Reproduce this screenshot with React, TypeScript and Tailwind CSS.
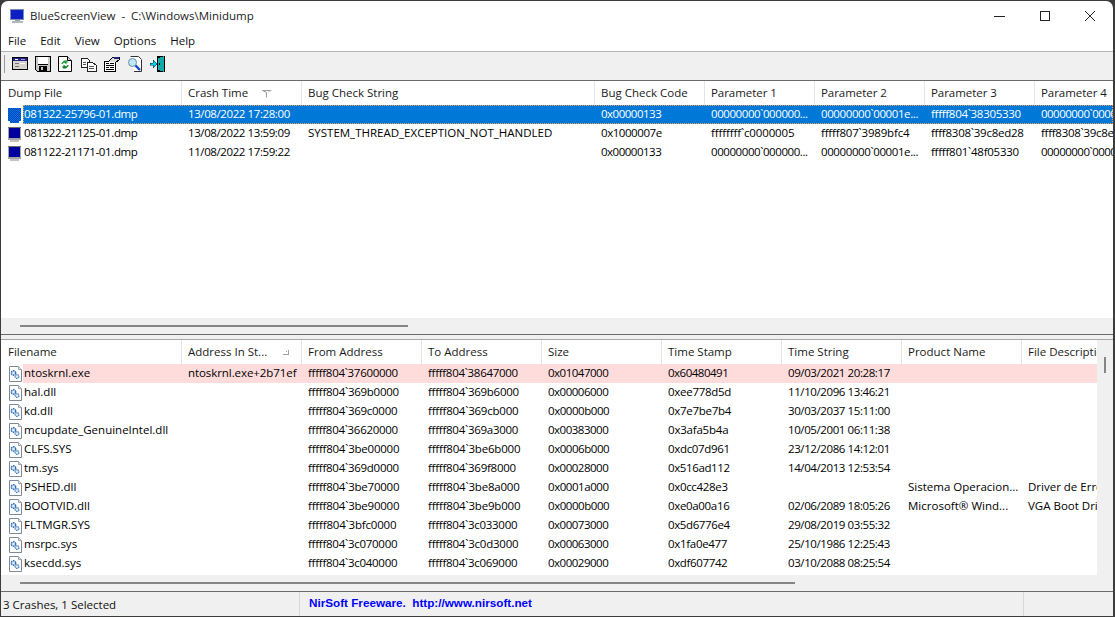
import React from "react";

const topGrid = "grid grid-cols-[181px_120px_293px_110px_110px_110px_110px_1fr]";
const botGrid = "grid grid-cols-[181px_120px_120px_120px_120px_120px_120px_120px_1fr]";

const topHead = ["Dump File", "Crash Time", "Bug Check String", "Bug Check Code", "Parameter 1", "Parameter 2", "Parameter 3", "Parameter 4"];
const topRows = [
  ["081322-25796-01.dmp", "13/08/2022 17:28:00", "", "0x00000133", "00000000`000000...", "00000000`00001e...", "fffff804`38305330", "00000000`00000000"],
  ["081322-21125-01.dmp", "13/08/2022 13:59:09", "SYSTEM_THREAD_EXCEPTION_NOT_HANDLED", "0x1000007e", "ffffffff`c0000005", "fffff807`3989bfc4", "ffff8308`39c8ed28", "ffff8308`39c8e540"],
  ["081122-21171-01.dmp", "11/08/2022 17:59:22", "", "0x00000133", "00000000`000000...", "00000000`00001e...", "fffff801`48f05330", "00000000`00000000"],
];
const botHead = ["Filename", "Address In St...", "From Address", "To Address", "Size", "Time Stamp", "Time String", "Product Name", "File Description"];
const botRows = [
  ["ntoskrnl.exe", "ntoskrnl.exe+2b71ef", "fffff804`37600000", "fffff804`38647000", "0x01047000", "0x60480491", "09/03/2021 20:28:17", "", ""],
  ["hal.dll", "", "fffff804`369b0000", "fffff804`369b6000", "0x00006000", "0xee778d5d", "11/10/2096 13:46:21", "", ""],
  ["kd.dll", "", "fffff804`369c0000", "fffff804`369cb000", "0x0000b000", "0x7e7be7b4", "30/03/2037 15:11:00", "", ""],
  ["mcupdate_GenuineIntel.dll", "", "fffff804`36620000", "fffff804`369a3000", "0x00383000", "0x3afa5b4a", "10/05/2001 06:11:38", "", ""],
  ["CLFS.SYS", "", "fffff804`3be00000", "fffff804`3be6b000", "0x0006b000", "0xdc07d961", "23/12/2086 14:12:01", "", ""],
  ["tm.sys", "", "fffff804`369d0000", "fffff804`369f8000", "0x00028000", "0x516ad112", "14/04/2013 12:53:54", "", ""],
  ["PSHED.dll", "", "fffff804`3be70000", "fffff804`3be8a000", "0x0001a000", "0x0cc428e3", "", "Sistema Operacion...", "Driver de Error"],
  ["BOOTVID.dll", "", "fffff804`3be90000", "fffff804`3be9b000", "0x0000b000", "0xe0a00a16", "02/06/2089 18:05:26", "Microsoft® Wind...", "VGA Boot Driver"],
  ["FLTMGR.SYS", "", "fffff804`3bfc0000", "fffff804`3c033000", "0x00073000", "0x5d6776e4", "29/08/2019 03:55:32", "", ""],
  ["msrpc.sys", "", "fffff804`3c070000", "fffff804`3c0d3000", "0x00063000", "0x1fa0e477", "25/10/1986 12:25:43", "", ""],
  ["ksecdd.sys", "", "fffff804`3c040000", "fffff804`3c069000", "0x00029000", "0xdf607742", "03/10/2088 08:25:54", "", ""],
];

// The reference's hinted system font has narrower digits than Open Sans; spacing is worked out per string.
function spacing(text: string) {
  const digits = (text.match(/[0-9]/g) || []).length;
  const effs = (text.match(/f/g) || []).length;
  if (!text.length) return undefined;
  return { letterSpacing: `${((-0.55 * digits + 0.2 * effs) / text.length).toFixed(3)}px` };
}

function Monitor({ selected }: { selected?: boolean }) {
  return (
    <svg width="16" height="16" viewBox="0 0 16 16" shapeRendering="crispEdges" className="shrink-0">
      <defs>
        <pattern id="dither" width="2" height="2" patternUnits="userSpaceOnUse">
          <rect width="2" height="2" fill="#0a3fc8" />
          <rect width="1" height="1" fill="#0078d7" />
          <rect x="1" y="1" width="1" height="1" fill="#0078d7" />
        </pattern>
      </defs>
      {selected ? (
        <>
          <rect x="1" y="1" width="13" height="13" fill="url(#dither)" />
          <rect x="3" y="14" width="9" height="2" fill="url(#dither)" />
        </>
      ) : (
        <>
          <rect x="1" y="1" width="13" height="13" fill="#a4a4a4" />
          <rect x="1" y="1" width="13" height="1" fill="#6e6e6e" />
          <rect x="2" y="2" width="11" height="10" fill="#00009c" />
          <rect x="3" y="14" width="9" height="2" fill="#c4c4c4" />
        </>
      )}
    </svg>
  );
}

function FileIcon() {
  return (
    <svg width="16" height="16" viewBox="0 0 16 16" className="shrink-0">
      <path d="M2.5 .5H11.5L14.5 3.5V15.5H2.5Z" fill="#fff" stroke="#7d8a96" />
      <path d="M11.5 .5V3.5H14.5" fill="#dfe6ec" stroke="#9aa6b0" />
      <circle cx="6.5" cy="7" r="2.2" fill="#dfeafa" stroke="#2f6cb0" strokeWidth="1.4" strokeDasharray="1.6 .6" />
      <circle cx="10" cy="10.5" r="1.9" fill="#dfeafa" stroke="#4a86c6" strokeWidth="1.3" strokeDasharray="1.5 .6" />
    </svg>
  );
}

function ToolIcons() {
  return (
    <div className="flex items-center gap-[7px]">
      <svg width="16" height="16" viewBox="0 0 16 16" shapeRendering="crispEdges">
        <rect x=".5" y="1.5" width="15" height="12" fill="#d8d4cc" stroke="#000" />
        <rect x="1" y="2" width="14" height="3" fill="#23238c" />
        <rect x="3" y="3" width="3" height="1" fill="#fff" />
        <rect x="9" y="3" width="4" height="1" fill="#9a9ad0" />
        <rect x="3" y="7" width="4" height="1" fill="#777" />
        <rect x="8" y="7" width="5" height="1" fill="#fff" />
        <rect x="3" y="10" width="4" height="1" fill="#777" />
      </svg>
      <svg width="16" height="16" viewBox="0 0 16 16" shapeRendering="crispEdges">
        <path d="M.5 .5H15.5V15.5H2.5L.5 13.5Z" fill="#c8c8c8" stroke="#000" />
        <rect x="3" y="1" width="10" height="7" fill="#fff" />
        <rect x="3" y="8" width="10" height="1" fill="#000" />
        <rect x="4" y="10" width="8" height="5" fill="#000" />
        <rect x="6" y="11" width="2" height="3" fill="#c8c8c8" />
      </svg>
      <svg width="16" height="16" viewBox="0 0 16 16">
        <path d="M.5 .5H9.5L13.5 4.5V15.5H.5Z" fill="#fff" stroke="#000" />
        <path d="M9.5 .5V4.5H13.5" fill="#d0d0d0" stroke="#000" />
        <path d="M3 7.5 L6 4.5 L9 4.5 L10 6.5 L8.5 6.5 L8.5 8.5 L6 6.5 L4.5 8Z" fill="#1f9c3a" />
        <path d="M11 9.5 L8 12.5 L5 12.5 L4 10.5 L5.5 10.5 L5.5 8.5 L8 10.5 L9.5 9Z" fill="#0c7f28" />
      </svg>
      <svg width="16" height="16" viewBox="0 0 16 16" shapeRendering="crispEdges">
        <path d="M.5 2.5H6.5L8.5 4.5V11.5H.5Z" fill="#fff" stroke="#222" />
        <path d="M6.5 6.5H11.5L15.5 9.5V15.5H6.5Z" fill="#fff" stroke="#222" />
        <rect x="2" y="6" width="3" height="1" fill="#555" />
        <rect x="2" y="8" width="3" height="1" fill="#555" />
        <rect x="8" y="10" width="5" height="1" fill="#555" />
        <rect x="8" y="12" width="5" height="1" fill="#555" />
      </svg>
      <svg width="16" height="16" viewBox="0 0 16 16" shapeRendering="crispEdges">
        <path d="M.5 5.5H11.5V15.5H.5Z" fill="#fff" stroke="#000" />
        <path d="M4.5 5.5L8.5 1.5H15.5V3.5L11.5 6.5" fill="#dcdcdc" stroke="#000" />
        <rect x="10" y="1" width="5" height="2" fill="#23238c" />
        <rect x="2" y="7" width="3" height="1" fill="#000" />
        <rect x="6" y="7" width="4" height="1" fill="#000" />
        <rect x="2" y="9" width="8" height="1" fill="#000" />
        <rect x="2" y="11" width="3" height="1" fill="#000" />
        <rect x="6" y="11" width="4" height="1" fill="#000" />
        <rect x="2" y="13" width="8" height="1" fill="#000" />
      </svg>
      <svg width="16" height="16" viewBox="0 0 16 16">
        <path d="M3.5 .5H11.5L14.5 3.5V15.5H7" fill="#fff" stroke="#333" />
        <circle cx="5.5" cy="6.5" r="4" fill="#c4e6f4" stroke="#5f93ae" />
        <path d="M8.5 9.5L13 14" stroke="#1c44c8" strokeWidth="2.4" />
      </svg>
      <svg width="16" height="16" viewBox="0 0 16 16" shapeRendering="crispEdges">
        <rect x="7" y="0" width="8" height="16" fill="#000" />
        <path d="M8 2L14 0V16L8 14Z" fill="#16a8a8" />
        <rect x="9" y="7" width="1" height="2" fill="#000" />
        <path d="M0 7H3V4L7 8L3 12V9H0Z" fill="#00d0f0" stroke="#000" strokeWidth=".4" />
      </svg>
    </div>
  );
}

function SortArrow({ small }: { small?: boolean }) {
  return small ? (
    <svg width="6" height="6" viewBox="0 0 6 6" className="absolute left-[101px] top-[9px]" shapeRendering="crispEdges">
      <path d="M5 1V5H0" fill="none" stroke="#a0a0a0" />
      <rect x="3" y="2" width="1" height="1" fill="#a0a0a0" />
    </svg>
  ) : (
    <svg width="10" height="8" viewBox="0 0 10 8" className="absolute left-[80px] top-[9px]">
      <path d="M.5 .5H9.5M.5 .5L4.5 2.5V7.5" fill="none" stroke="#9a9a9a" />
      <path d="M9.5 .5L6 2" fill="none" stroke="#d0d0d0" />
    </svg>
  );
}

function Header({ labels, grid, arrow }: { labels: string[]; grid: string; arrow: number }) {
  return (
    <div className={`${grid} h-[24px] shrink-0 bg-white text-[#1a1a1a]`}>
      {labels.map((l, i) => (
        <div key={i} style={spacing(l)} className="relative flex items-center overflow-hidden whitespace-nowrap border-r border-[#e5e5e5] pb-px pl-[6px] first:pl-[7px] last:border-r-0">
          {l}
          {i === 1 && <SortArrow small={arrow === 1} />}
        </div>
      ))}
    </div>
  );
}

function Scrollbar({ width }: { width: string }) {
  return (
    <div className="flex h-[16px] shrink-0 items-center bg-[#f0f0f0] pb-px pl-[19px]">
      <div className={`h-[2px] ${width} bg-[#858585]`} />
    </div>
  );
}

export default function App() {
  return (
    <div className="h-[617px] w-[1115px] overflow-hidden bg-[#3c3c3c] pb-px pl-px pr-[2px] pt-px font-['Open_Sans',sans-serif] text-[11.5px] leading-none text-black">
      <div className="flex h-full flex-col overflow-hidden rounded-t-[7px] bg-white">
        {/* Title bar */}
        <div className="flex h-[29px] shrink-0 items-center">
          <div className="ml-[8px]">
            <svg width="16" height="16" viewBox="0 0 16 16" shapeRendering="crispEdges">
              <rect x="1" y="1" width="14" height="11" fill="#7b8fb0" />
              <rect x="2" y="2" width="12" height="9" fill="#0d1fc4" />
              <rect x="6" y="12" width="5" height="1" fill="#9ba2ae" />
              <rect x="3" y="13" width="11" height="2" fill="#b4b8c0" />
            </svg>
          </div>
          <div className="ml-[5px] whitespace-pre text-[#222]">BlueScreenView  -  C:\Windows\Minidump</div>
          <div className="ml-auto flex items-center">
            <svg width="46" height="29" viewBox="0 0 46 29" shapeRendering="crispEdges">
              <rect x="17" y="15" width="11" height="1" fill="#222" />
            </svg>
            <svg width="46" height="29" viewBox="0 0 46 29" shapeRendering="crispEdges" className="ml-[-1px]">
              <rect x="18.5" y="10.5" width="9" height="9" rx="1" fill="none" stroke="#222" />
            </svg>
            <svg width="46" height="29" viewBox="0 0 46 29" className="ml-[-1px]">
              <path d="M18 10L28 20M28 10L18 20" stroke="#222" strokeWidth="1" fill="none" />
            </svg>
          </div>
        </div>
        {/* Menu */}
        <div className="flex h-[21px] shrink-0 items-center gap-[14px] pl-[7px] text-[#111]">
          <span>File</span>
          <span>Edit</span>
          <span>View</span>
          <span>Options</span>
          <span>Help</span>
        </div>
        {/* Toolbar */}
        <div className="flex h-[30px] shrink-0 items-center border-b border-t border-b-[#6b6b6b] border-t-[#b4b4b4] bg-[#f0f0f0] pb-[4px] pl-[3px]">
          <div className="mr-[7px] h-[18px] w-px bg-[#999]" />
          <ToolIcons />
        </div>
        {/* Upper list */}
        <div className="flex h-[253px] shrink-0 flex-col">
          <Header labels={topHead} grid={topGrid} arrow={0} />
          <div className="flex-1 overflow-hidden">
            {topRows.map((r, i) => (
              <div key={i} className={`${topGrid} relative h-[19px]`}>
                {i === 0 && <div className="absolute inset-y-0 left-[22px] right-0 border border-dotted border-[#e8a060] bg-[#0078d7]" />}
                {r.map((c, j) =>
                  j === 0 ? (
                    <div key={j} className={`relative flex items-center gap-px overflow-hidden whitespace-nowrap pl-[6px] ${i === 0 ? "text-white" : ""}`}>
                      <Monitor selected={i === 0} />
                      <span style={spacing(c)} className="-mt-px">{c}</span>
                    </div>
                  ) : (
                    <div key={j} style={spacing(c)} className={`relative flex items-center overflow-hidden whitespace-nowrap pb-px pl-[6px] ${i === 0 ? "text-white" : ""}`}>
                      {c}
                    </div>
                  )
                )}
              </div>
            ))}
          </div>
          <Scrollbar width="w-[388px]" />
        </div>
        {/* Splitter */}
        <div className="h-[6px] shrink-0 border-y border-b-[#a8a8a8] border-t-[#6b6b6b] bg-[#f0f0f0]" />
        {/* Lower list */}
        <div className="flex min-h-0 flex-1">
          <div className="flex min-w-0 flex-1 flex-col">
            <Header labels={botHead} grid={botGrid} arrow={1} />
            <div className="flex-1 overflow-hidden">
              {botRows.map((r, i) => (
                <div key={i} className={`${botGrid} relative h-[19px]`}>
                  {i === 0 && <div className="absolute inset-y-0 left-[22px] right-0 bg-[#ffdcdc]" />}
                  {r.map((c, j) =>
                    j === 0 ? (
                      <div key={j} className="relative flex items-center gap-px overflow-hidden whitespace-nowrap pl-[6px]">
                        <FileIcon />
                        <span style={spacing(c)} className="-mt-px">{c}</span>
                      </div>
                    ) : (
                      <div key={j} style={spacing(c)} className="relative flex items-center overflow-hidden whitespace-nowrap pb-px pl-[6px]">
                        {c}
                      </div>
                    )
                  )}
                </div>
              ))}
            </div>
            <Scrollbar width="w-[775px]" />
          </div>
          <div className="w-[16px] shrink-0 bg-[#f0f0f0] pl-[7px] pt-[17px]">
            <div className="h-[16px] w-[2px] bg-[#858585]" />
          </div>
        </div>
        {/* Status bar */}
        <div className="flex h-[25px] shrink-0 border-t border-[#6b6b6b] bg-[#f0f0f0]">
          <div className="flex w-[299px] items-center border-r border-[#d8d8d8] pl-[2px] pt-[2px] text-[#111]">3 Crashes, 1 Selected</div>
          <div className="flex w-[724px] items-center whitespace-pre border-r border-[#d8d8d8] pb-[3px] pl-[9px] font-['Liberation_Sans',sans-serif] text-[11.7px] font-bold text-[#0000ff]">NirSoft Freeware.  http://www.nirsoft.net</div>
          <div className="flex-1" />
        </div>
      </div>
    </div>
  );
}
